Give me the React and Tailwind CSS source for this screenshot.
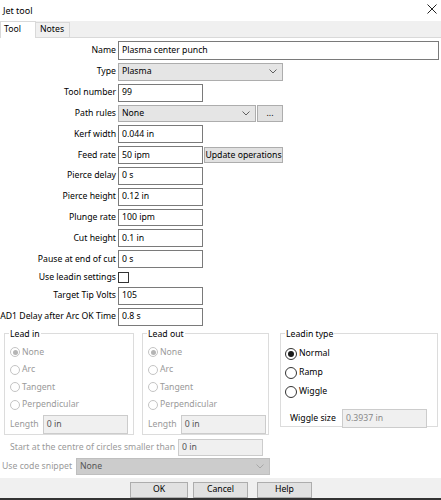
import React from 'react';

const Chevron = ({ color = '#606060' }) => (
  <svg width="8" height="5" viewBox="0 0 8 5" fill="none">
    <path d="M0.5 0.5 L4 4 L7.5 0.5" stroke={color} strokeWidth="1" />
  </svg>
);

function Input({ value, w = 'w-[85px]', h = 'h-[17.8px]' }) {
  return (
    <div className={`${w} ${h} border border-[#7a7a7a] bg-white flex items-center px-[3px] whitespace-nowrap`}>
      {value}
    </div>
  );
}

function Select({ value, w }) {
  return (
    <div className={`${w} h-[17.8px] border border-[#adadad] bg-[#e5e5e5] flex items-center justify-between pl-[3px] pr-[5px]`}>
      <span>{value}</span>
      <Chevron />
    </div>
  );
}

function Row({ label, children, h = 'h-[17.8px]' }) {
  return (
    <div className={`flex items-center ${h}`}>
      <div className="w-[116px] flex justify-end whitespace-nowrap">{label}</div>
      <div className="ml-[2px] flex items-center h-full">{children}</div>
    </div>
  );
}

function Radio({ label, checked, disabled }) {
  return (
    <div className={`flex items-center h-[17.6px] ${disabled ? 'text-[#9a9a9a]' : 'text-black'}`}>
      <span
        className={`w-[10px] h-[10px] rounded-full border flex items-center justify-center bg-white ${
          disabled ? 'border-[#c4c4c4]' : 'border-[#333333]'
        }`}
      >
        {checked && (
          <span className={`w-[5px] h-[5px] rounded-full ${disabled ? 'bg-[#b5b5b5]' : 'bg-[#1a1a1a]'}`} />
        )}
      </span>
      <span className="ml-[2px]">{label}</span>
    </div>
  );
}

function LeadGroup({ title, className }) {
  return (
    <fieldset className={`border border-[#dcdcdc] ${className}`}>
      <legend className="ml-[4px] px-[1px] text-black leading-none">{title}</legend>
      <div className="pl-[5px] pt-[5px]">
        <Radio label="None" checked disabled />
        <Radio label="Arc" disabled />
        <Radio label="Tangent" disabled />
        <Radio label="Perpendicular" disabled />
        <div className="flex items-center h-[19px] mt-[1px] text-[#9a9a9a]">
          <span>Length</span>
          <div className="ml-[4px] w-[85px] h-[19px] border border-[#cccccc] bg-[#f0f0f0] flex items-center px-[3px] text-[#555555]">
            0 in
          </div>
        </div>
      </div>
    </fieldset>
  );
}

export default function App() {
  return (
    <div className="w-[441px] h-[500px] bg-white relative overflow-hidden font-['Noto_Sans',sans-serif] text-[8.7px] text-black flex flex-col">
      {/* title bar */}
      <div className="h-[21px] flex items-center justify-between pl-[3px] pr-[3px] shrink-0">
        <span className="text-[9px]">Jet tool</span>
        <svg width="10" height="10" viewBox="0 0 10 10" className="mr-[1px] mb-[4px]">
          <path d="M0.5 0.5 L9.5 9.5 M9.5 0.5 L0.5 9.5" stroke="#222" strokeWidth="1" />
        </svg>
      </div>

      {/* tabs */}
      <div className="h-[17px] bg-[#f0f0f0] flex items-end shrink-0 border-b border-[#d9d9d9]">
        <div className="w-[36px] h-[17px] bg-white border border-[#d9d9d9] border-b-0 -mb-px pl-[3px] pt-[1px] relative z-10">
          Tool
        </div>
        <div className="w-[34px] h-[15px] bg-[#f0f0f0] border border-[#d9d9d9] border-l-0 border-b-0 pl-[4px]">
          Notes
        </div>
      </div>

      {/* form */}
      <div className="flex flex-col gap-[3px] pt-[3px] shrink-0">
        <Row label="Name" h="h-[19px]">
          <Input value="Plasma center punch" w="w-[321px]" h="h-[19px]" />
        </Row>
        <Row label="Type">
          <Select value="Plasma" w="w-[165px]" />
        </Row>
        <Row label="Tool number">
          <Input value="99" />
        </Row>
        <Row label="Path rules">
          <Select value="None" w="w-[138px]" />
          <div className="ml-[1px] w-[26px] h-[17.8px] border border-[#adadad] bg-[#e1e1e1] flex items-center justify-center">
            ...
          </div>
        </Row>
        <Row label="Kerf width">
          <Input value="0.044 in" />
        </Row>
        <Row label="Feed rate">
          <Input value="50 ipm" />
          <div className="ml-[1px] w-[79px] h-[16px] border border-[#adadad] bg-[#e1e1e1] flex items-center justify-center whitespace-nowrap">
            Update operations
          </div>
        </Row>
        <Row label="Pierce delay">
          <Input value="0 s" />
        </Row>
        <Row label="Pierce height">
          <Input value="0.12 in" />
        </Row>
        <Row label="Plunge rate">
          <Input value="100 ipm" />
        </Row>
        <Row label="Cut height">
          <Input value="0.1 in" />
        </Row>
        <Row label="Pause at end of cut">
          <Input value="0 s" />
        </Row>
        <Row label="Use leadin settings" h="h-[13px]">
          <div className="w-[11px] h-[11px] border border-[#333333] bg-white" />
        </Row>
        <Row label="Target Tip Volts">
          <Input value="105" />
        </Row>
        <Row label="AD1 Delay after Arc OK Time">
          <Input value="0.8 s" />
        </Row>
      </div>

      {/* group boxes */}
      <div className="flex items-start mt-[4px] shrink-0">
        <LeadGroup title="Lead in" className="ml-[4px] w-[130px] h-[105px]" />
        <LeadGroup title="Lead out" className="ml-[8px] w-[127px] h-[105px]" />
        <fieldset className="ml-[11px] w-[158px] h-[97px] border border-[#dcdcdc]">
          <legend className="ml-[4px] px-[1px] leading-none">Leadin type</legend>
          <div className="pl-[4px] pt-[6px] flex flex-col">
            <div className="flex items-center h-[19px]">
              <span className="w-[12px] h-[12px] rounded-full border border-[#333333] flex items-center justify-center">
                <span className="w-[6px] h-[6px] rounded-full bg-[#1a1a1a]" />
              </span>
              <span className="ml-[2px]">Normal</span>
            </div>
            <div className="flex items-center h-[19px]">
              <span className="w-[12px] h-[12px] rounded-full border border-[#333333]" />
              <span className="ml-[2px]">Ramp</span>
            </div>
            <div className="flex items-center h-[19px]">
              <span className="w-[12px] h-[12px] rounded-full border border-[#333333]" />
              <span className="ml-[2px]">Wiggle</span>
            </div>
            <div className="flex items-center h-[19px] mt-[8px] pl-[5px]">
              <span className="w-[52px]">Wiggle size</span>
              <div className="w-[85px] h-[19px] border border-[#cccccc] bg-[#f0f0f0] flex items-center px-[3px] text-[#8a8a8a]">
                0.3937 in
              </div>
            </div>
          </div>
        </fieldset>
      </div>

      {/* bottom options */}
      <div className="flex items-center h-[17px] mt-[4px] pl-[10px] text-[#9a9a9a] shrink-0">
        <span className="w-[168px] whitespace-nowrap">Start at the centre of circles smaller than</span>
        <div className="w-[85px] h-[17px] border border-[#cccccc] bg-[#f0f0f0] flex items-center px-[3px] text-[#555555]">
          0 in
        </div>
      </div>
      <div className="flex items-center h-[17px] mt-[2px] pl-[2px] text-[#9a9a9a] shrink-0">
        <span className="w-[74px] whitespace-nowrap">Use code snippet</span>
        <div className="w-[194px] h-[17px] border border-[#bfbfbf] bg-[#cccccc] flex items-center justify-between pl-[3px] pr-[5px] text-[#555555]">
          <span>None</span>
          <Chevron color="#a8a8a8" />
        </div>
      </div>

      {/* footer */}
      <div className="mt-[3px] flex-1 bg-[#f0f0f0] flex items-end shrink-0">
        <div className="ml-[130px] w-[58px] h-[16px] border border-[#adadad] bg-[#e1e1e1] flex items-center justify-center">
          OK
        </div>
        <div className="ml-[5px] w-[55px] h-[16px] border border-[#adadad] bg-[#e1e1e1] flex items-center justify-center">
          Cancel
        </div>
        <div className="ml-[9px] w-[55px] h-[16px] border border-[#adadad] bg-[#e1e1e1] flex items-center justify-center">
          Help
        </div>
      </div>
      <div className="h-[2px] bg-[#333333] shrink-0" />
    </div>
  );
}
